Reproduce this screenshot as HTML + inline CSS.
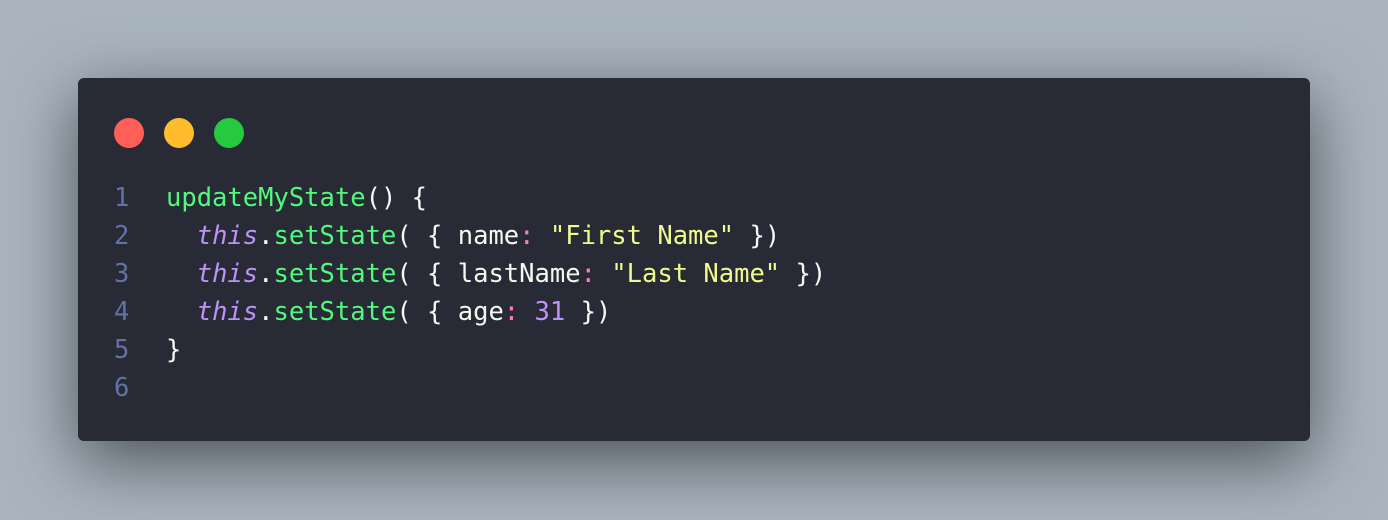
<!DOCTYPE html>
<html><head><style>
html,body{margin:0;padding:0;}
body{width:1388px;height:520px;background:#a9b4bf;position:relative;overflow:hidden;}
.win{position:absolute;left:78px;top:78px;width:1232px;height:363px;background:#282a36;border-radius:6px;box-shadow:0 20px 68px rgba(0,0,0,0.55);}
.dot{position:absolute;top:40px;width:30px;height:30px;border-radius:50%;}
.code{position:absolute;left:0;top:101px;font-family:"DejaVu Sans Mono","Liberation Mono",monospace;font-size:25.5px;line-height:38px;color:#f8f8f2;white-space:pre;}
.ln{display:inline-block;width:88px;text-align:left;padding-left:36px;box-sizing:border-box;color:#6272a4;}
.g{color:#50fa7b}.p{color:#bd93f9;font-style:italic}.k{color:#ff79c6}.y{color:#f1fa8c}.n{color:#bd93f9}
</style></head><body>
<div class="win">
<div class="dot" style="left:36px;background:#ff5f56"></div>
<div class="dot" style="left:86px;background:#ffbd2e"></div>
<div class="dot" style="left:136px;background:#27c93f"></div>
<div class="code"><div><span class="ln">1</span><span class="g">updateMyState</span>() {</div><div><span class="ln">2</span>  <span class="p">this</span>.<span class="g">setState</span>( { name<span class="k">:</span> <span class="y">"First Name"</span> })</div><div><span class="ln">3</span>  <span class="p">this</span>.<span class="g">setState</span>( { lastName<span class="k">:</span> <span class="y">"Last Name"</span> })</div><div><span class="ln">4</span>  <span class="p">this</span>.<span class="g">setState</span>( { age<span class="k">:</span> <span class="n">31</span> })</div><div><span class="ln">5</span>}</div><div><span class="ln">6</span></div></div>
</div>
</body></html>
